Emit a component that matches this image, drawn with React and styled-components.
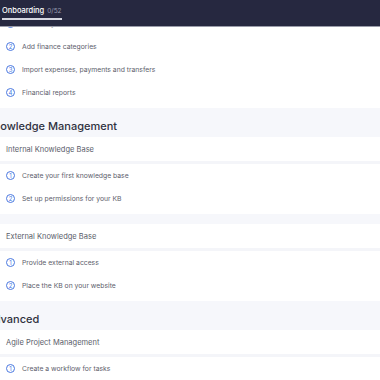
import React from 'react';
import styled, { createGlobalStyle } from 'styled-components';

const GlobalStyle = createGlobalStyle`
  html, body {
    margin: 0;
    padding: 0;
    background: #ffffff;
    font-family: Inter, "Liberation Sans", sans-serif;
    overflow: hidden;
  }
`;

const StyledHeader = styled.header`
  position: fixed;
  top: 0;
  left: 0;
  right: 0;
  z-index: 2;
  height: 26px;
  display: flex;
  align-items: flex-end;
  padding-left: 2px;
  background-color: #262840;
  border-bottom: 1px solid #9a9caa;
`;

const Tab = styled.div`
  display: flex;
  align-items: baseline;
  gap: 3px;
  height: 18px;
  margin-bottom: 6px;
  border-bottom: 2px solid #d5d7e0;
  box-sizing: border-box;
  padding-top: 4px;
  font-size: 7.5px;
  font-weight: 500;
  color: #ffffff;
`;

const TabCount = styled.span`
  font-size: 6.5px;
  font-weight: 400;
  color: #9a9cb0;
`;

const Page = styled.main`
  height: 380px;
  overflow: hidden;
  background: #f6f7fb;
`;

const Scroller = styled.div`
  padding-top: ${(p) => p.offset}px;
  background: #ffffff;
`;

const Section = styled.div`
  background: #f6f7fb;
`;

const SectionTitle = styled.h2`
  margin: 0 0 0 -14px;
  padding: 11px 0 4px;
  font-size: 11px;
  line-height: 14px;
  font-weight: 500;
  color: #2f3140;
  white-space: nowrap;
`;

const Card = styled.section`
  background: #ffffff;
  & + & {
    margin-top: 10px;
  }
`;

const CardHeader = styled.div`
  height: 24px;
  display: flex;
  align-items: center;
  padding-left: 6px;
  font-size: 7.5px;
  color: #5a5d6a;
  border-bottom: 3px solid #f4f5f9;
`;

const Steps = styled.ol`
  list-style: none;
  margin: 0;
  padding: 0 0 4px;
`;

const Step = styled.li`
  height: 23px;
  display: flex;
  align-items: center;
  gap: 7px;
  padding-left: 6px;
  font-size: 6.8px;
  color: #5d606c;
`;

const StepNumber = styled.span`
  width: 9px;
  height: 9px;
  box-sizing: border-box;
  border: 1.2px solid #4a78e0;
  border-radius: 50%;
  display: flex;
  align-items: center;
  justify-content: center;
  font-size: 6px;
  line-height: 1;
  color: #4a78e0;
`;

const sections = [
  {
    cards: [
      {
        steps: [
          'Connect your bank accounts',
          'Add finance categories',
          'Import expenses, payments and transfers',
          'Financial reports',
        ],
      },
    ],
  },
  {
    title: 'Knowledge Management',
    cards: [
      {
        title: 'Internal Knowledge Base',
        steps: ['Create your first knowledge base', 'Set up permissions for your KB'],
      },
      {
        title: 'External Knowledge Base',
        steps: ['Provide external access', 'Place the KB on your website'],
      },
    ],
  },
  {
    title: 'Advanced',
    cards: [
      {
        title: 'Agile Project Management',
        steps: ['Create a workflow for tasks', 'Set up sprints'],
      },
    ],
  },
];

function StepCard({ title, steps }) {
  return (
    <Card>
      {title && <CardHeader>{title}</CardHeader>}
      <Steps>
        {steps.map((s, i) => (
          <Step key={s}>
            <StepNumber>{i + 1}</StepNumber>
            {s}
          </Step>
        ))}
      </Steps>
    </Card>
  );
}

export default function App() {
  return (
    <>
      <GlobalStyle />
      <StyledHeader>
        <Tab>
          Onboarding <TabCount>0/52</TabCount>
        </Tab>
      </StyledHeader>
      <Page>
        <Scroller offset={12}>
          {sections.map((section, i) => (
            <Section key={i}>
              {section.title && <SectionTitle>{section.title}</SectionTitle>}
              {section.cards.map((c, j) => (
                <StepCard key={j} {...c} />
              ))}
            </Section>
          ))}
        </Scroller>
      </Page>
    </>
  );
}
